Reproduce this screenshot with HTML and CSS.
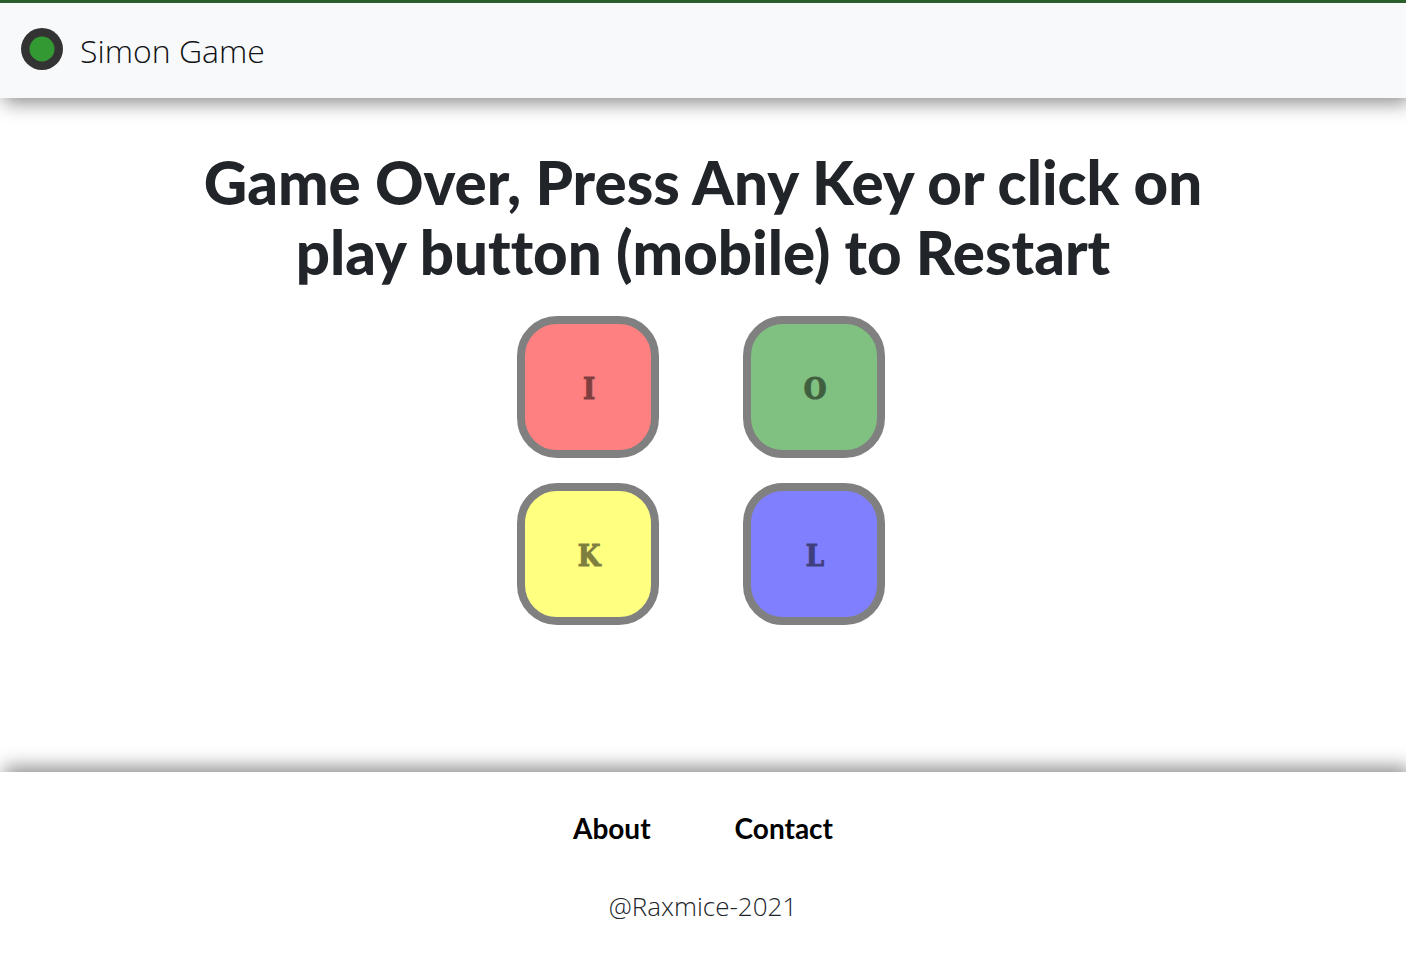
FILE: index.html
```html
<!DOCTYPE html>
<html lang="en">
<head>
<meta charset="utf-8">
<title>Simon Game</title>
<link rel="stylesheet" href="styles.css">
</head>
<body>
<header class="navbar">
  <a class="brand" href="#">
    <svg class="brand-logo" viewBox="0 0 42 42" aria-hidden="true"><circle cx="21" cy="21" r="21" fill="#333"/><circle cx="21" cy="21" r="12.5" fill="#339933"/></svg>
    <span>Simon Game</span>
  </a>
</header>
<main class="game">
  <h1 class="title">Game Over, Press Any Key or click on<br>play button (mobile) to Restart</h1>
  <div class="board">
    <button class="pad red" type="button"><span class="key">I</span></button>
    <button class="pad green" type="button"><span class="key">O</span></button>
    <button class="pad yellow" type="button"><span class="key">K</span></button>
    <button class="pad blue" type="button"><span class="key">L</span></button>
  </div>
</main>
<footer class="footer">
  <nav class="links"><a href="#">About</a><a href="#">Contact</a></nav>
  <p class="credit">@Raxmice-2021</p>
</footer>
</body>
</html>
```
FILE: styles.css
```css
* { box-sizing: border-box; }
body {
  margin: 0;
  min-height: 100vh;
  display: flex;
  flex-direction: column;
  background: #fff;
  color: #212529;
  font-family: "Open Sans", sans-serif;
}
.navbar {
  display: flex;
  padding: 20px 21px;
  border-top: 3px solid #2a602d;
  background: #f8f9fb;
  box-shadow: 4px 5px 18px rgba(0, 0, 0, 0.45);
}
.brand {
  display: flex;
  align-items: center;
  gap: 17px;
  color: #101214;
  font-size: 32px;
  font-weight: 350;
  line-height: 55px;
  text-decoration: none;
}
.brand-logo { width: 42px; height: 42px; margin-bottom: 4px; }
.game {
  flex: 1;
  display: flex;
  flex-direction: column;
  align-items: center;
  padding-top: 49px;
}
.title {
  margin: 0 0 29px;
  font-family: Lato, sans-serif;
  font-size: 60px;
  font-weight: 900;
  font-variant-ligatures: none;
  line-height: 70px;
  text-align: center;
}
.board {
  display: grid;
  grid-template-columns: auto auto;
  gap: 25px 84px;
  padding-right: 4px;
}
.pad {
  width: 142px;
  height: 142px;
  padding: 4px 0 0 2px;
  border: 8px solid #808080;
  border-radius: 40px;
  color: #000;
  font: 700 29px "DejaVu Serif Condensed", "DejaVu Serif", serif;
}
.key { opacity: 0.5; -webkit-text-stroke: 1px #000; }
.red { background: #ff8080; }
.green { background: #80c080; }
.yellow { background: #ffff80; }
.blue { background: #8080ff; }
.footer {
  padding: 36px 0 27px;
  background: #fff;
  box-shadow: 4px -5px 18px rgba(0, 0, 0, 0.45);
  text-align: center;
}
.links { display: flex; justify-content: center; gap: 84px; }
.links a {
  color: #000;
  font: 700 28px/40px Lato, sans-serif;
  text-decoration: none;
}
.credit { margin: 36px 0 0; font-size: 26px; font-weight: 350; line-height: 44px; }
```
